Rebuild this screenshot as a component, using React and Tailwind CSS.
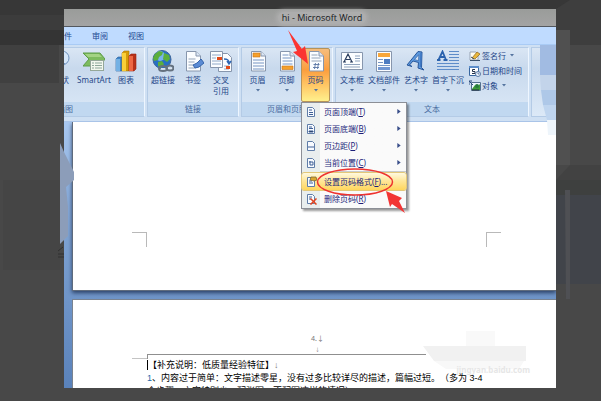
const paper = "fill-[#fbfdff] stroke-[#8796ad]";

function Sheet({ children }) {
  return (
    <svg viewBox="0 0 22 22" className="size-[22px]">
      <path d="M4.500 1.500H14L18.500 6V21H4.500Z" className={paper} />
      <path d="M14 1.500V6H18.500" className="fill-[#dbe6f5] stroke-[#8796ad]" />
      {children}
    </svg>
  );
}

const icons = {
  shapes: (
    <svg viewBox="0 0 22 22" className="size-[22px]">
      <circle cx="12" cy="8" r="7" fill="#d5e6f9" stroke="#6f92bd" />
      <path d="M10 14v5l5-6" fill="#b9d2ee" stroke="#6f92bd" />
    </svg>
  ),
  smartart: (
    <svg viewBox="0 0 22 22" className="size-[22px]">
      <path d="M0 3h17l5 6-5 7H0l6-7z" fill="#7dbb5e" stroke="#5d9c48" />
      <path d="M2 4h14l3 3H5z" fill="#a3d383" />
      <rect x="7.500" y="10.500" width="13" height="10" fill="#f3f8ef" stroke="#94a799" />
      <path d="M9 13h2m1 0h7M9 15.500h2m1 0h7M9 18h2m1 0h7" stroke="#8da79a" />
    </svg>
  ),
  chart: (
    <svg viewBox="0 0 22 22" className="size-[22px]">
      <path d="M1 9l2-2h4v14H1z" fill="#3f85c8" stroke="#255c98" strokeWidth=".6" />
      <path d="M1 9h4v12H1z" fill="#74b1e4" />
      <path d="M7 3l2-2h5v20H7z" fill="#d79b08" stroke="#a97807" strokeWidth=".6" />
      <path d="M7 3h4v18H7z" fill="#f9cf38" />
      <path d="M14 6l2-2h5v15l-2 2h-5z" fill="#b8321a" stroke="#982410" strokeWidth=".6" />
      <path d="M14 6h4v15h-4z" fill="#ee6743" />
    </svg>
  ),
  link: (
    <svg viewBox="0 0 22 22" className="size-[22px]">
      <circle cx="10" cy="9.500" r="9" fill="#2770c4" stroke="#3c649a" />
      <circle cx="8" cy="6" r="5" fill="#8cc4f5" opacity=".8" />
      <path d="M3 4l4-3 4 1-1 3-3 2-1 3-4 1-1-3zM12 3l5 2 1 4-3 3-4-3zM6 12l4-1 2 3-3 4-3-2z" fill="#5caf3c" />
      <g fill="none" stroke="#65717f" strokeWidth="2">
        <ellipse cx="11" cy="18.500" rx="4" ry="2.500" /><ellipse cx="18" cy="18" rx="3.500" ry="2.500" />
      </g>
      <path d="M9 18.500h4m3 0h4" stroke="#dce3ea" />
    </svg>
  ),
  bookmark: (
    <Sheet>
      <path d="M6.500 9h7M6.500 12h6M6.500 15h5M6.500 18h7" stroke="#93a3b8" />
      <path d="M11 15l4-2 4-4 3 4-5 4-4 1z" fill="#5b8bd4" stroke="#3564aa" />
    </Sheet>
  ),
  crossref: (
    <svg viewBox="0 0 22 22" className="size-[22px]">
      <path d="M8.500 3.500h9l4 4v14h-13z" className={paper} />
      <path d="M.5 1.500h12v16H.5z" className={paper} />
      <path d="M2 5h9M2 8h4M2 11h9M2 14h9M14 16h5M14 19h5" stroke="#8fa8c8" />
      <path d="M7 7h5v3H7zM16 16h4v3h-4z" fill="#e24a18" />
      <path d="M14 9c4 0 5 1 5 4m-2-2l2 3 2-3" fill="none" stroke="#2e67b4" strokeWidth="1.500" />
    </svg>
  ),
  header: (
    <Sheet>
      <path d="M6 3h7v4H6z" fill="#f5a02c" stroke="#c7731a" strokeWidth=".6" />
      <path d="M6 10h11M6 13h11M6 16h11M6 19h11" stroke="#7795c3" />
    </Sheet>
  ),
  footer: (
    <Sheet>
      <path d="M6.500 5h6M6.500 8h9M6.500 11h10M6.500 14h10" stroke="#7795c3" />
      <path d="M6 16h11v3.500H6z" fill="#f5a02c" stroke="#c7731a" strokeWidth=".6" />
    </Sheet>
  ),
  number: (
    <Sheet>
      <path d="M6.500 5h6M6.500 8h9M6.500 11h10" stroke="#93a3b8" />
      <path d="M10.500 13l-1 6m4-6l-1 6M8.500 14.500h6m-6.500 3h6" stroke="#5a76a5" strokeWidth=".9" />
    </Sheet>
  ),
  textbox: (
    <svg viewBox="0 0 22 22" className="size-[22px]">
      <path d="M.5 2.500h21v17H.5z" className={paper} />
      <path d="M3 12L7 4l4 8M5 9.500h4M2 12h3m4 0h3" fill="none" stroke="#283b5c" strokeWidth="1.200" />
      <path d="M14 6h5M14 8.500h5M14 11h5M3 14.500h16M3 17h16" stroke="#8fa3bd" />
    </svg>
  ),
  parts: (
    <svg viewBox="0 0 22 22" className="size-[22px]">
      <path d="M3.500 1.500h15v20h-15z" className={paper} />
      <path d="M5 3h12v4H5z" fill="#f8a63a" />
      <path d="M5 9.500h5m-5 3h5m-5 3h12" stroke="#7795c3" />
      <path d="M11 9h6v5h-6z" fill="#4d7cc2" />
      <path d="M5 17h12v3H5z" fill="#7197d3" />
    </svg>
  ),
  wordart: (
    <svg viewBox="0 0 22 22" className="size-[22px]">
      <path d="M2 15L13 1.500l4 .5-.5 15.500 2.500 2.500-6-2 .5-5.500L8 11l-3.500 4L7 16.500z" fill="#5b98de" stroke="#28579b" />
      <path d="M9.500 9.500l4 1.200.3-6z" fill="#d7e5f5" stroke="#28579b" strokeWidth=".6" />
      <path d="M16 3l-.5 14" stroke="#3f78c4" strokeWidth="1.500" />
    </svg>
  ),
  dropcap: (
    <svg viewBox="0 0 22 22" className="size-[22px]">
      <path d="M1.500 10L5.500 1.500 9 10M3 7h5M0 10h3.500m3 0h4" fill="none" stroke="#2b62ad" strokeWidth="1.800" />
      <path d="M12 1.500h10M12 4.500h10M12 7.500h10M12 10.500h10M0 13.500h22M0 16.500h22M0 19.500h22" stroke="#5d8cc9" />
    </svg>
  ),
  signature: (
    <svg viewBox="0 0 12 12" className="size-3">
      <path d="M1 2h6l2 2v6H1z" fill="#fffdf4" stroke="#98a5b5" />
      <path d="M3 8l5-6 3 2-5 5z" fill="#e9b83c" stroke="#8c6120" strokeWidth=".7" />
      <path d="M1 10.500h10M2 7l3 2" stroke="#39516d" />
    </svg>
  ),
  date: (
    <svg viewBox="0 0 12 12" className="size-3">
      <path d="M.5 1.500h9v9h-9z" fill="#fff" stroke="#38669f" />
      <path d="M0 1h10v2H0z" fill="#5b8dcb" />
      <path d="M6 4.500H3.500v2H6v2H3" fill="none" stroke="#24334c" />
      <circle cx="9" cy="9" r="2.500" fill="#eef5ff" stroke="#597aa5" />
      <path d="M9 7.500V9h1.500" fill="none" stroke="#33557f" strokeWidth=".7" />
    </svg>
  ),
  object: (
    <svg viewBox="0 0 12 12" className="size-3">
      <path d="M2.500 2.500h9v8h-9z" fill="#eef7ff" stroke="#53708f" />
      <path d="M3 9l3-4 2 2 3-3v6H3z" fill="#3d9b3a" />
      <circle cx="8" cy="6" r="2" fill="#277b3c" />
      <path d="M0 1l4 4M0 5V1h3" fill="none" stroke="#2d4c7c" />
      <path d="M3 10h7" stroke="#252f3b" />
    </svg>
  ),
};

function Caret() {
  return (
    <svg viewBox="0 0 4 3" className="h-[3px] w-1 shrink-0">
      <path d="M0 0h4L2 2.500z" fill="#55749f" />
    </svg>
  );
}

function Tool({ icon, label, second, caret, active, width }) {
  return (
    <button
      className={`flex h-[54px] shrink-0 flex-col items-center whitespace-nowrap text-[8px] leading-[11px] text-[#1f4788] ${width} ${
        active
          ? "rounded-[2px] border border-[#b5935a] bg-linear-to-b from-[#f5bd7c] via-[#fb9d3c] via-40% to-[#fff08c] pt-px"
          : "pt-[2px]"
      }`}
    >
      {icons[icon]}
      <span className="mt-[2px]">{label}</span>
      {second && <span>{second}</span>}
      {caret && <span className="flex h-[11px] items-center"><Caret /></span>}
    </button>
  );
}

function Group({ title, width, tools, titleAlign = "justify-center", children }) {
  return (
    <section className={`flex h-[70px] shrink-0 flex-col border border-[#b4cbe6] border-r-[#eef6ff] bg-linear-to-b from-[#dae6f4] via-[#c8d9ed] via-30% to-[#dce9f7] ${width}`}>
      <div className={`flex h-[54px] ${tools}`}>{children}</div>
      <h2 className={`flex h-[14px] items-center whitespace-nowrap bg-[#c1d8f0] text-[8px] leading-[14px] text-[#4a6c9f] ${titleAlign}`}>{title}</h2>
    </section>
  );
}

function SmallTool({ icon, label, caret }) {
  return (
    <button className="flex h-[15px] items-center gap-px whitespace-nowrap text-[8px] leading-[11px] text-[#1f4788]">
      {icons[icon]}
      <span className="mr-[3px]">{label}</span>
      {caret && <Caret />}
    </button>
  );
}

function MenuIcon({ kind }) {
  return (
    <svg viewBox="0 0 12 12" className="size-3 shrink-0">
      <path d="M2.500 1.500h5l2 2v7h-7z" fill="#f8fbff" stroke="#5f7da8" />
      {kind === "top" && <path d="M4 4h3M4 6.500h4M4 8.500h4" stroke="#3d5f95" />}
      {kind === "bottom" && <path d="M4 4h3M4 5.500h4M4 8h4v1H4z" stroke="#3d5f95" />}
      {kind === "margin" && <path d="M4 8V6m2 2V6m2 2V6" stroke="#3d5f95" />}
      {kind === "current" && <path d="M4 5h4v3H5V4" fill="none" stroke="#3d5f95" />}
      {kind === "format" && (
        <>
          <path d="M4 5h3M4 7h4" stroke="#3d5f95" />
          <path d="M6 1h5l1 3-3 1-4-1z" fill="#d9a62f" stroke="#72602f" strokeWidth=".7" />
        </>
      )}
      {kind === "remove" && (
        <>
          <path d="M4 4h3M4 6h2" stroke="#3d5f95" />
          <path d="M5.500 5.500l6 6m0-6l-6 6" stroke="#e2431e" strokeWidth="1.500" />
        </>
      )}
    </svg>
  );
}

function MenuItem({ kind, label, accel, tail = "", sub, active }) {
  return (
    <button
      role="menuitem"
      className={`flex h-[17px] w-full items-center whitespace-nowrap pl-[3px] pr-[5px] text-[8px] leading-[12px] text-[#1b1f7a] ${
        active ? "rounded-[2px] bg-linear-to-b from-[#fff9df] via-[#ffe79a] via-45% to-[#ffd65a] outline outline-[#e3c878]" : ""
      }`}
    >
      <MenuIcon kind={kind} />
      <span className="ml-[7px] flex-1 text-left">
        {label}(<u>{accel}</u>){tail}
      </span>
      {sub && (
        <svg viewBox="0 0 4 6" className="h-[5px] w-1"><path d="M0 0l4 3-4 3z" fill="#3a4f8a" /></svg>
      )}
    </button>
  );
}

function PageNumberMenu() {
  return (
    <div role="menu" className="absolute left-0 top-[54px] z-10 w-[106px] border border-[#8c8f96] bg-linear-to-r from-[#e9eeee] from-[18px] to-[#fafafa] to-[18px] pb-px shadow-[2px_2px_2px_#00000066]">
      <MenuItem kind="top" label="页面顶端" accel="T" sub />
      <MenuItem kind="bottom" label="页面底端" accel="B" sub />
      <MenuItem kind="margin" label="页边距" accel="P" sub />
      <MenuItem kind="current" label="当前位置" accel="C" sub />
      <div className="mb-px ml-[18px] h-px bg-[#c9cccf]" />
      <MenuItem kind="format" label="设置页码格式" accel="F" tail="..." active />
      <MenuItem kind="remove" label="删除页码" accel="R" />
      <svg viewBox="0 0 110 50" className="pointer-events-none absolute left-0 top-[65px] h-[50px] w-[110px]">
        <ellipse cx="53" cy="14" rx="37.500" ry="13" fill="none" stroke="#ee3330" strokeWidth="1.500" />
        <path d="M84 23l16 7-3 3 6 12-13-9-2 3z" fill="#f23534" />
      </svg>
    </div>
  );
}

function Ribbon() {
  return (
    <div className="flex h-[77px] shrink-0 gap-[2px] border-b border-[#a9c4e8] bg-[#cfe0f3] pt-[2px]">
      <Group title="插图" width="w-[81px] overflow-hidden border-l-0" tools="justify-end pr-[7px]" titleAlign="-ml-2 pl-px">
        <Tool icon="shapes" label="形状" width="w-[24px]" />
        <Tool icon="smartart" label="SmartArt" width="w-[42px]" />
        <Tool icon="chart" label="图表" width="w-[22px]" />
      </Group>
      <Group title="链接" width="w-[92px]" tools="">
        <Tool icon="link" label="超链接" width="w-[30px]" />
        <Tool icon="bookmark" label="书签" width="w-[30px]" />
        <Tool icon="crossref" label="交叉" second="引用" width="w-[26px]" />
      </Group>
      <Group title="页眉和页脚" width="w-[92px]" tools="pl-px">
        <Tool icon="header" label="页眉" caret width="w-[29px]" />
        <Tool icon="footer" label="页脚" caret width="w-[29px]" />
        <div className="relative">
          <Tool icon="number" label="页码" caret active width="w-[29px]" />
          <PageNumberMenu />
        </div>
      </Group>
      <Group title="文本" width="w-[194px]" tools="">
        <Tool icon="textbox" label="文本框" caret width="w-[32px]" />
        <Tool icon="parts" label="文档部件" caret width="w-[32px]" />
        <Tool icon="wordart" label="艺术字" caret width="w-[32px]" />
        <Tool icon="dropcap" label="首字下沉" caret width="w-[32px]" />
        <div className="flex flex-col pl-[5px]">
          <SmallTool icon="signature" label="签名行" caret />
          <SmallTool icon="date" label="日期和时间" />
          <SmallTool icon="object" label="对象" caret />
        </div>
      </Group>
      <div className="h-[70px] flex-1 border border-r-0 border-[#b4cbe6] bg-linear-to-b from-[#dae6f4] via-[#c8d9ed] via-30% to-[#dce9f7]" />
    </div>
  );
}

function CornerMarks() {
  return (
    <div className="flex justify-between pl-[59px] pr-[55px] pt-[110px]">
      <span className="h-[15px] w-[15px] border-r border-t border-[#b9b9b9]" />
      <span className="h-[15px] w-[15px] border-l border-t border-[#b9b9b9]" />
    </div>
  );
}

function Backdrop() {
  return (
    <svg viewBox="0 0 601 401" preserveAspectRatio="none" className="absolute inset-0 h-full w-full">
      <path d="M0 0H601V45H0z" fill="#373737" />
      <path d="M0 15H64V30H0z" fill="#3c3c3c" />
      <path d="M0 45H59V83H0z" fill="#404040" />
      <path d="M0 30H64V45H0z" fill="#343434" />
      <path d="M556 9L570 0H601V45H556z" fill="#3e3e3e" />
      <path d="M556 30H570V165H556z" fill="#505050" />
      <path d="M570 165H601V180H556z" fill="#424242" />
      <path d="M556 180H601V195H556z" fill="#3e403f" />
      <path d="M556 195H601V284H556z" fill="#41444a" />
      <path d="M565 190h5v109h-4z" fill="#4f5054" />
      <path d="M3 180H60V270H3z" fill="#454545" />
      <path d="M58 251l5-4m-5 7h6m-6 3h6" stroke="#303030" />
    </svg>
  );
}

function Annotations() {
  return (
    <>
      <svg viewBox="0 0 25 35" className="pointer-events-none absolute left-[223px] top-[21px] z-20 h-[35px] w-[25px]">
        <path d="M1 0l14 19 3-3 3 18-15-12 4-1z" fill="#fb3432" />
      </svg>
      <svg viewBox="0 0 14 102" className="pointer-events-none absolute -left-1 top-[134px] h-[102px] w-[14px]">
        <path d="M0 0l4 9 6 12 4 8v8l-8 7 2 20v29l-8 8z" fill="#8c9db9" />
      </svg>
      <svg viewBox="0 0 16 90" className="pointer-events-none absolute right-0 top-[36px] h-[90px] w-4">
        <path d="M0 0h16v30H0z" fill="#a1bbe2" />
        <path d="M0 30h16v15H1z" fill="#c3d4ea" />
        <path d="M1 45h15v15H3z" fill="#aec8e8" />
        <path d="M3 60h13v15H7z" fill="#bfd5ef" />
        <path d="M7 75h9v15H8z" fill="#eef5fb" />
      </svg>
    </>
  );
}

function Watermark() {
  return (
    <div className="pointer-events-none absolute right-[22px] top-[30px] h-[50px] w-[112px]">
      <svg viewBox="0 0 112 50" className="absolute inset-0 h-full w-full">
        <path d="M44 1h29v15H44z" fill="#f9f9f9" />
        <path d="M1 16h103v15H12z" fill="#f1f1f1" />
        <path d="M12 31h90l-5 8H24z" fill="#f8f8f8" />
      </svg>
      <span className="absolute bottom-[6px] right-1 text-[8px] leading-[8px] font-bold text-[#e6e6e6]">jingyan.baidu.com</span>
    </div>
  );
}

export default function App() {
  return (
    <main className="relative flex h-screen flex-col overflow-hidden bg-[#484848] pb-[13px] pl-16 pr-[45px] pt-[9px] font-['Noto_Sans','Noto_Sans_CJK_SC',sans-serif]">
      <Backdrop />
      <div className="relative flex min-h-0 flex-1 flex-col">
        <header className="flex h-[18px] shrink-0 items-center justify-center border-b border-[#53575e] bg-linear-to-b from-[#9a9c9a] to-[#a3a3a3] pl-[24px]">
          <h1 className="rounded-full bg-[#adadad] px-1 font-['Open_Sans',sans-serif] text-[9px] leading-[12px] text-[#16181c] shadow-[0_0_4px_2px_#adadad]">hi - Microsoft Word</h1>
        </header>
        <nav className="flex h-[18px] shrink-0 items-center overflow-hidden border-b border-[#a9cbf5] bg-[#bfdbff] text-[8px] leading-[12px] text-[#1b4a92]">
          <button className="-ml-[8px] mr-5 whitespace-nowrap">邮件</button>
          <button className="mr-5 whitespace-nowrap">审阅</button>
          <button className="whitespace-nowrap">视图</button>
        </nav>
        <Ribbon />
        <div className="flex min-h-0 flex-1 flex-col gap-2 overflow-hidden bg-linear-to-b from-[#a9c8f0] via-[#86a9d8] via-30% to-[#5a82ba] pl-2">
          <section className="h-[169px] shrink-0 border-b border-l border-[#5f6b7c] bg-white shadow-[0_2px_4px_#2b4166]">
            <CornerMarks />
          </section>
          <section className="relative min-h-0 flex-1 overflow-hidden border-l border-t border-[#7a838f] bg-white">
            <div className="pl-[6px] pt-[34px] text-center text-[7px] leading-[10px] text-[#777]">
              <p>4.↓</p>
              <p className="text-[5px]">↓</p>
            </div>
            <div className="flex pl-[59px]">
              <span className="mt-1 h-px w-[15px] bg-[#c4c4c4]" />
              <span className="h-[5px] w-[279px] border-l border-t border-[#8f8f8f]" />
            </div>
            <Watermark />
            <div className="relative whitespace-nowrap pl-[74px] font-['Liberation_Sans','Noto_Sans_CJK_SC',sans-serif] text-[9px] leading-[13px] text-black [text-spacing-trim:space-all]">
              <p><span className="border-l border-black">【补充说明：低质量经验特征】</span><span className="text-[#777]">↓</span></p>
              <p><span className="text-[#2568a8]">1</span>、内容过于简单：文字描述零星，没有过多比较详尽的描述，篇幅过短。（多为 3-4</p>
              <p>个步骤，文字特别少，配张图，不配图这样的情况）</p>
            </div>
          </section>
        </div>
        <Annotations />
      </div>
    </main>
  );
}
